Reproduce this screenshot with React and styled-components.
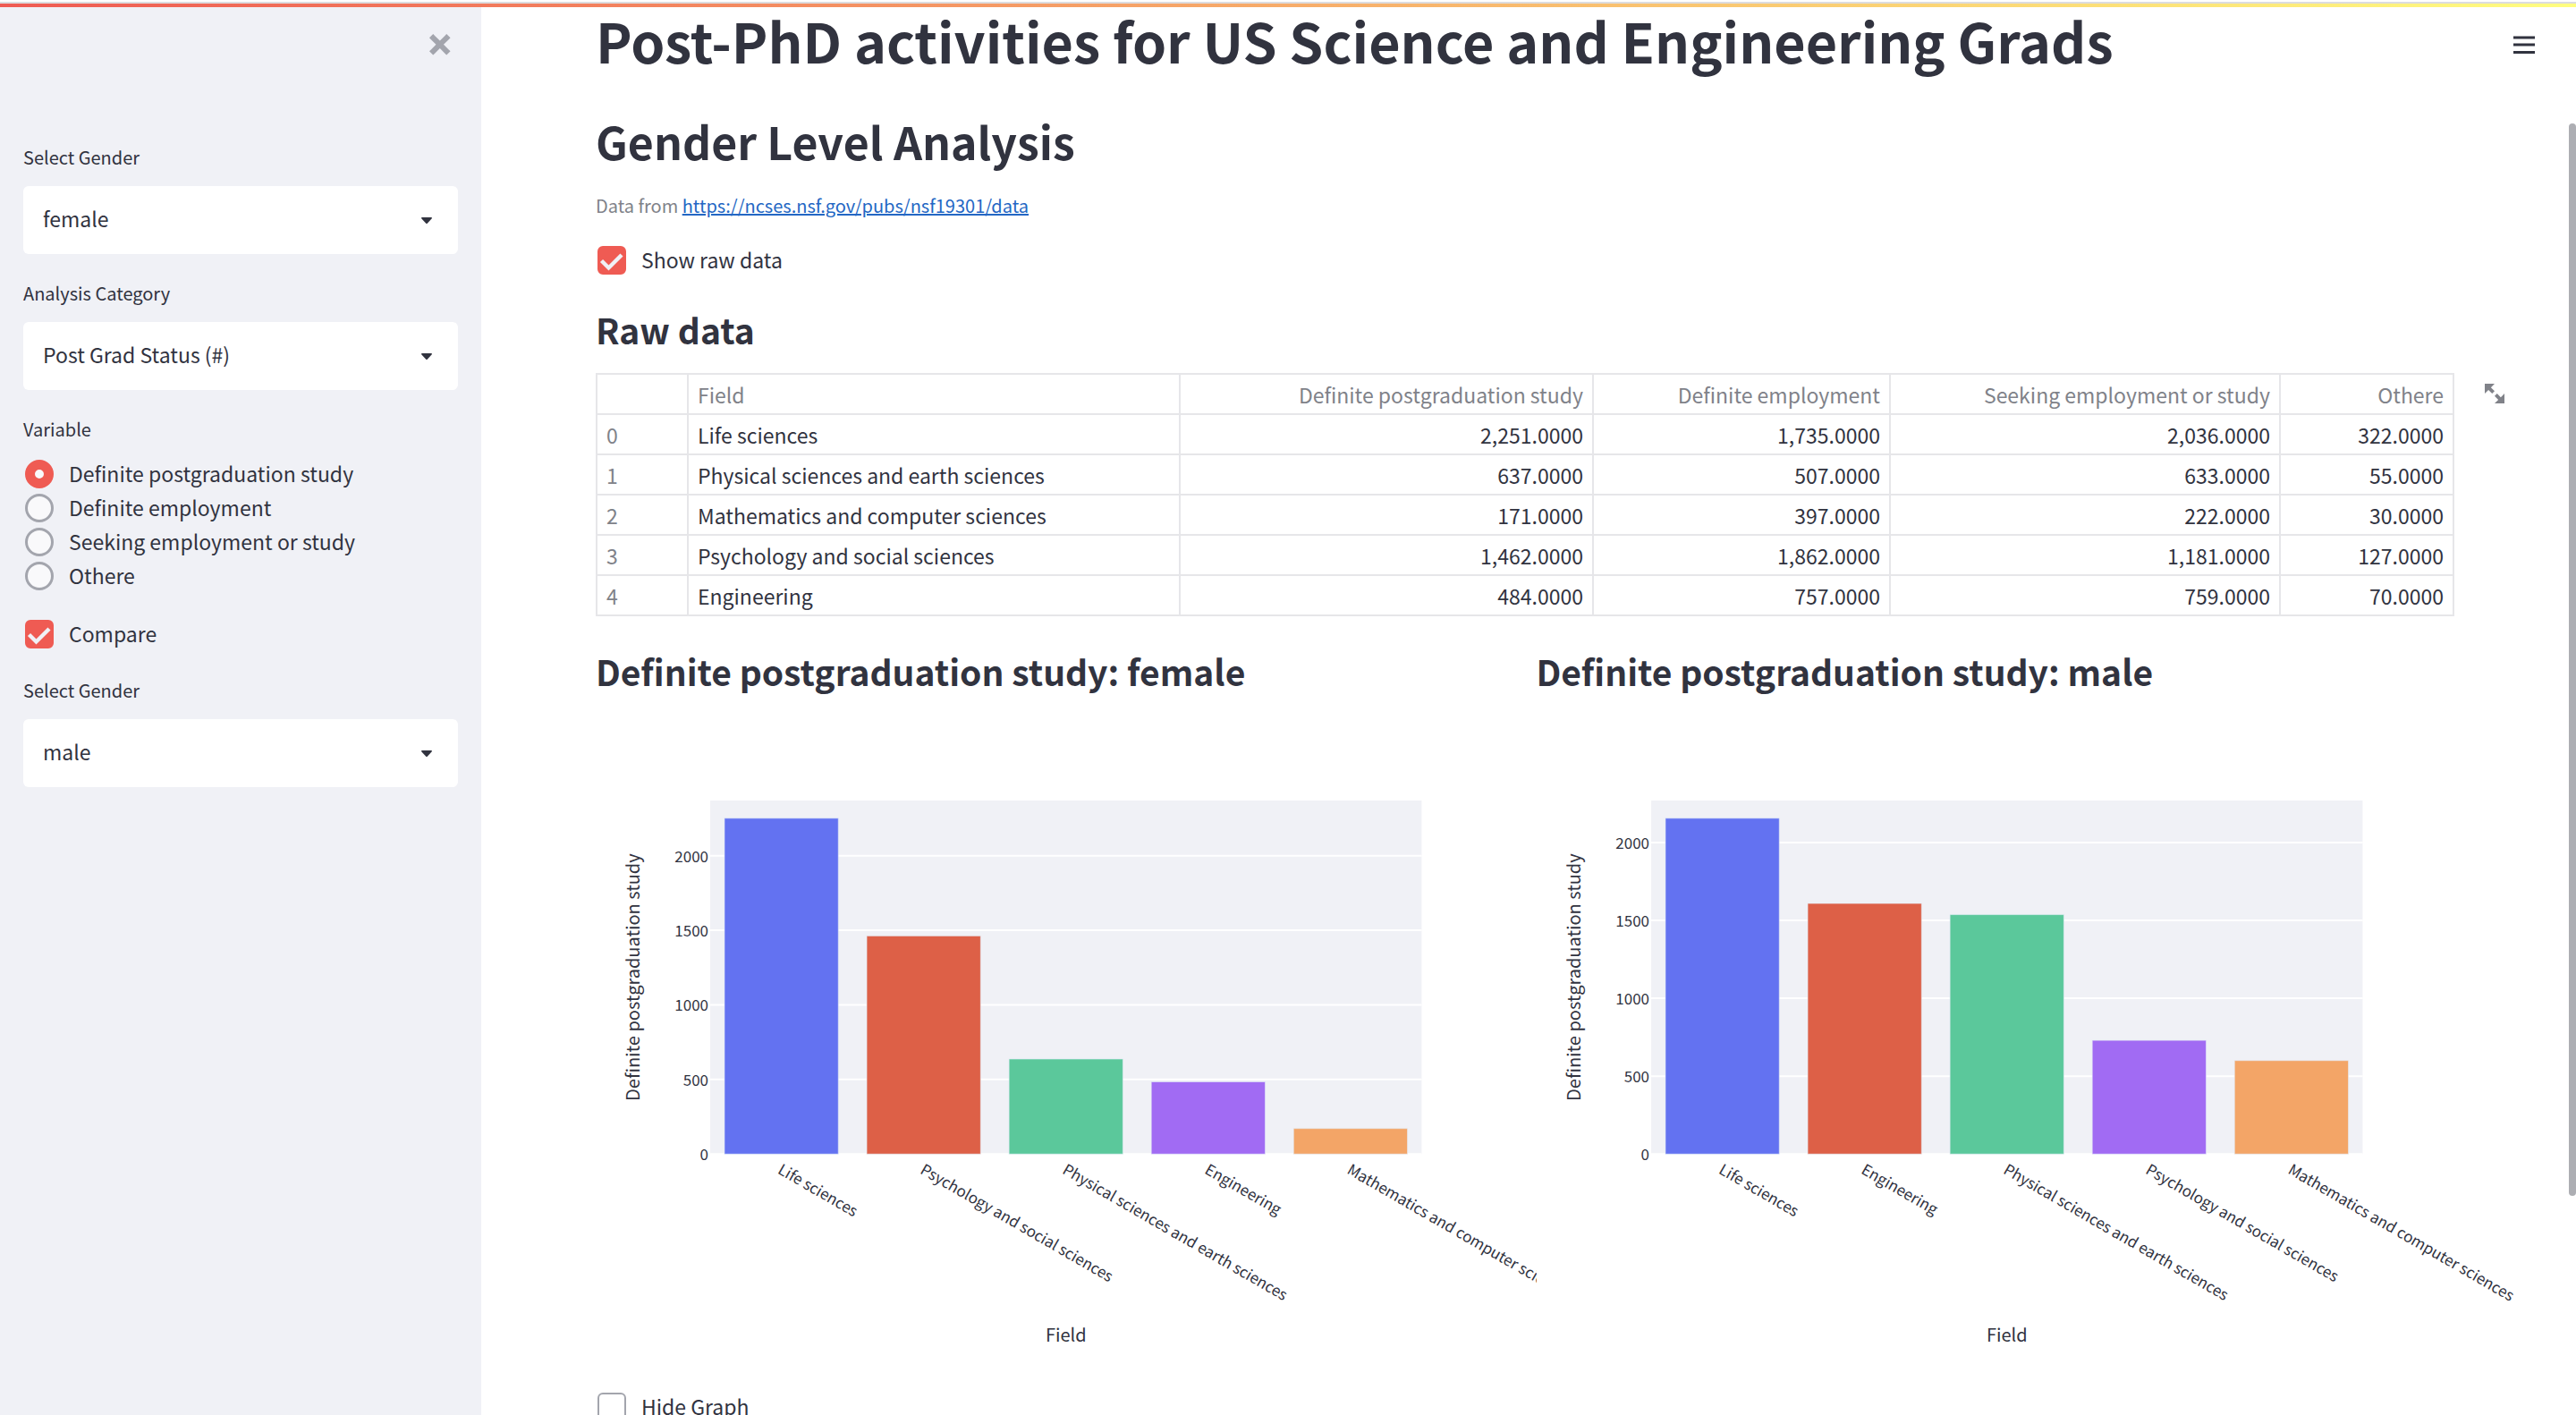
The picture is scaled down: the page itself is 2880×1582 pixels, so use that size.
import React, { useId } from "react";
import styled, { createGlobalStyle } from "styled-components";

const ink = "#31333f";
const muted = "#808289";
const line = "#e6e6e9";
const accent = "#ef5b53";
const ring = "#a3a5ad";
const panel = "#f0f1f6";
const sans = '"Noto Sans CJK SC", "Noto Sans", sans-serif';

const GlobalStyle = createGlobalStyle`
  * { box-sizing: border-box; }
  body { margin: 0; background: #fff; color: ${ink}; font-family: ${sans}; font-size: 23px; }
  button, select, input { font: inherit; color: inherit; margin: 0; }
`;

const Page = styled.div`
  position: relative;
  display: flex;
  height: 100vh;
  overflow: hidden;
`;

const TopBar = styled.div`
  position: absolute;
  inset: 0 0 auto 0;
  height: 8px;
  z-index: 2;
  border-top: 2px solid #fff;
  background: linear-gradient(90deg, ${accent}, #fffd80);
  &::before {
    content: "";
    display: block;
    height: 2px;
    background: #dcdcdf;
  }
`;

const Sidebar = styled.aside`
  flex: 0 0 538px;
  background: ${panel};
  padding: 0 26px;
`;

const SidebarHeader = styled.div`
  display: flex;
  justify-content: flex-end;
  align-items: flex-start;
  height: 158px;
  padding-top: 34px;
`;

const IconButton = styled.button`
  display: flex;
  align-items: center;
  justify-content: center;
  width: 40px;
  height: 32px;
  padding: 0;
  border: 0;
  background: none;
  color: ${(p) => p.$color};
`;

const Controls = styled.form`
  display: flex;
  flex-direction: column;
  gap: 26px;
`;

const Field = styled.div`
  display: flex;
  flex-direction: column;
  gap: 14px;
`;

const FieldLabel = styled.label`
  font-size: 20px;
  line-height: 36px;
`;

const RadioSet = styled.fieldset`
  margin: 0;
  padding: 0 0 1px;
  border: 0;
  min-width: 0;
`;

const Legend = styled.legend`
  padding: 0 0 13px;
  font-size: 20px;
  line-height: 36px;
`;

const SelectWrap = styled.div`
  position: relative;
  svg {
    position: absolute;
    right: 29px;
    top: 35px;
    pointer-events: none;
  }
`;

const SelectBox = styled.select`
  appearance: none;
  display: block;
  width: 100%;
  height: 76px;
  padding: 0 64px 4px 22px;
  border: 0;
  border-radius: 6px;
  background: #fff;
`;

const Choice = styled.label`
  display: flex;
  align-items: center;
  gap: 17px;
  height: 38px;
  padding-left: 2px;
`;

const ChoiceText = styled.span`
  padding-bottom: 2px;
`;

const Radio = styled.input`
  appearance: none;
  flex: none;
  width: 32px;
  height: 32px;
  border: 3px solid ${ring};
  border-radius: 50%;
  background: #f9f9fb;
  &:checked {
    border: 11px solid ${accent};
  }
`;

const CheckMark = styled.span`
  position: relative;
  display: flex;
  flex: none;
  svg {
    position: absolute;
    inset: 0;
    pointer-events: none;
  }
`;

const Checkbox = styled.input`
  appearance: none;
  width: 32px;
  height: 32px;
  border: 2px solid ${ring};
  border-radius: 6px;
  background: #fff;
  &:checked {
    border-color: ${accent};
    background: ${accent};
  }
`;

const Main = styled.main`
  position: relative;
  flex: 1;
  min-width: 0;
  padding: 6px 111px 0 128px;
`;

const MenuSlot = styled.div`
  position: absolute;
  top: 34px;
  right: 38px;
`;

const Title = styled.h1`
  margin: 0;
  font-size: 61px;
  line-height: 78px;
  font-weight: 600;
`;

const SectionTitle = styled.h2`
  margin: 41px 0 0;
  font-size: 50px;
  line-height: 64px;
  font-weight: 600;
`;

const SubTitle = styled.h3`
  margin: 33px 0 24px;
  font-size: 39px;
  line-height: 50px;
  font-weight: 600;
`;

const Caption = styled.p`
  margin: 23px 0 24px;
  font-size: 20px;
  line-height: 36px;
  color: ${muted};
  a { color: #2467c4; }
`;

const TableArea = styled.div`
  position: relative;
  margin-bottom: 3px;
  padding-right: 25px;
`;

const ExpandSlot = styled.div`
  position: absolute;
  top: 7px;
  right: -40px;
`;

const DataTable = styled.table`
  width: 100%;
  table-layout: fixed;
  border-collapse: collapse;
  line-height: 36px;
  th, td {
    height: 45px;
    padding: 0 10px;
    border: 2px solid ${line};
    font-weight: 400;
    text-align: right;
  }
  thead th, tbody th { color: ${muted}; }
  th:nth-child(1), th:nth-child(2), td:nth-child(2) { text-align: left; }
`;

const Col = styled.col`
  width: ${(p) => p.$width};
`;

const Columns = styled.div`
  display: grid;
  grid-template-columns: 1fr 1fr;
`;

const ChartPanel = styled.section`
  min-width: 0;
`;

const ChartSvg = styled.svg`
  display: block;
  width: 100%;
  height: auto;
  overflow: ${(p) => (p.$clip ? "hidden" : "visible")};
  margin-bottom: 35px;
  text { fill: ${ink}; font-family: ${sans}; font-size: 17px; }
  text.axis { font-size: 20px; text-anchor: middle; }
`;

const ScrollThumb = styled.div`
  position: absolute;
  top: 138px;
  right: 0;
  width: 8px;
  height: 1199px;
  border-radius: 4px;
  background: #adaeb3;
`;

function Select({ label, value, options }) {
  const id = useId();
  return (
    <Field>
      <FieldLabel htmlFor={id}>{label}</FieldLabel>
      <SelectWrap>
        <SelectBox id={id} defaultValue={value}>
          {options.map((o) => (
            <option key={o}>{o}</option>
          ))}
        </SelectBox>
        <svg width="12" height="7" viewBox="0 0 12 7" aria-hidden="true">
          <path d="M1 0h10a1 1 0 0 1 .6 1.6L7 6.4a1.4 1.4 0 0 1-2 0L.4 1.6A1 1 0 0 1 1 0z" fill={ink} />
        </svg>
      </SelectWrap>
    </Field>
  );
}

function Check({ label, checked }) {
  return (
    <Choice>
      <CheckMark>
        <Checkbox type="checkbox" defaultChecked={checked} />
        {checked && (
          <svg width="32" height="32" viewBox="0 0 32 32" aria-hidden="true">
            <path d="M4.5 16.5l8 8L27 10" fill="none" stroke="#f0f1f6" strokeWidth="4.4" />
          </svg>
        )}
      </CheckMark>
      <ChoiceText>{label}</ChoiceText>
    </Choice>
  );
}

const variables = [
  "Definite postgraduation study",
  "Definite employment",
  "Seeking employment or study",
  "Othere",
];

const rows = [
  ["Life sciences", 2251, 1735, 2036, 322],
  ["Physical sciences and earth sciences", 637, 507, 633, 55],
  ["Mathematics and computer sciences", 171, 397, 222, 30],
  ["Psychology and social sciences", 1462, 1862, 1181, 127],
  ["Engineering", 484, 757, 759, 70],
];

const female = [
  ["Life sciences", 2251],
  ["Psychology and social sciences", 1462],
  ["Physical sciences and earth sciences", 637],
  ["Engineering", 484],
  ["Mathematics and computer sciences", 171],
];

const male = [
  ["Life sciences", 2156],
  ["Engineering", 1609],
  ["Physical sciences and earth sciences", 1537],
  ["Psychology and social sciences", 730],
  ["Mathematics and computer sciences", 600],
];

const palette = ["#6372f1", "#dd6047", "#5bc89b", "#a16bf3", "#f3a567"];

const formatNumber = (n) =>
  n.toLocaleString("en-US", { minimumFractionDigits: 4 });

function BarChart({ data, yTitle, clip }) {
  const plot = { x: 128, y: 96, w: 795, h: 395 };
  const bottom = plot.y + plot.h;
  const scale = (plot.h * 0.95) / data[0][1];
  const step = plot.w / data.length;
  const mid = plot.y + plot.h / 2;
  return (
    <ChartSvg viewBox="0 0 1051 720" role="img" aria-label={yTitle} $clip={clip}>
      <rect x={plot.x} y={plot.y} width={plot.w} height={plot.h} fill={panel} />
      {[0, 500, 1000, 1500, 2000].map((t) => {
        const y = bottom - t * scale;
        return (
          <g key={t}>
            <line x1={plot.x} x2={plot.x + plot.w} y1={y} y2={y} stroke="#fff" strokeWidth="2" />
            <text x={plot.x - 2} y={y + 7} textAnchor="end">{t}</text>
          </g>
        );
      })}
      {data.map(([name, value], i) => {
        const h = value * scale;
        const cx = plot.x + step * (i + 0.5);
        return (
          <g key={name}>
            <rect
              x={cx - step * 0.4}
              y={bottom - h}
              width={step * 0.8}
              height={h}
              fill={palette[i]}
              stroke="#e5ecf6"
              strokeOpacity="0.6"
            />
            <text transform={`translate(${cx - 5} ${bottom + 21}) rotate(30)`}>{name}</text>
          </g>
        );
      })}
      <text className="axis" x={plot.x + plot.w / 2} y="701">Field</text>
      <text className="axis" transform={`translate(49 ${mid}) rotate(-90)`}>{yTitle}</text>
    </ChartSvg>
  );
}

export default function App() {
  return (
    <>
      <GlobalStyle />
      <Page>
        <TopBar />
        <Sidebar>
          <SidebarHeader>
            <IconButton type="button" aria-label="Close sidebar" $color={ring}>
              <svg width="24" height="24" viewBox="0 0 8 8" fill="currentColor" aria-hidden="true">
                <path d="M1.41 0L0 1.41l.72.72 1.78 1.81-1.78 1.78L0 6.41l1.41 1.44.72-.72 1.81-1.81 1.78 1.81.69.72 1.44-1.44-.72-.69-1.81-1.78 1.81-1.81.72-.72L6.41 0l-.69.72L3.94 2.5 2.13.72 1.41 0z" />
              </svg>
            </IconButton>
          </SidebarHeader>
          <Controls>
            <Select label="Select Gender" value="female" options={["female", "male"]} />
            <Select
              label="Analysis Category"
              value="Post Grad Status (#)"
              options={["Post Grad Status (#)"]}
            />
            <RadioSet>
              <Legend>Variable</Legend>
              {variables.map((v, i) => (
                <Choice key={v}>
                  <Radio type="radio" name="variable" defaultChecked={i === 0} />
                  <ChoiceText>{v}</ChoiceText>
                </Choice>
              ))}
            </RadioSet>
            <Check label="Compare" checked />
            <Select label="Select Gender" value="male" options={["female", "male"]} />
          </Controls>
        </Sidebar>
        <Main>
          <MenuSlot>
            <IconButton type="button" aria-label="Menu" $color={ink}>
              <svg width="24" height="20" viewBox="0 0 24 20" aria-hidden="true">
                <path d="M0 2h24M0 10h24M0 18.5h24" stroke="currentColor" strokeWidth="2.8" />
              </svg>
            </IconButton>
          </MenuSlot>
          <Title>Post-PhD activities for US Science and Engineering Grads</Title>
          <SectionTitle>Gender Level Analysis</SectionTitle>
          <Caption>
            Data from{" "}
            <a href="https://ncses.nsf.gov/pubs/nsf19301/data">
              https://ncses.nsf.gov/pubs/nsf19301/data
            </a>
          </Caption>
          <Check label="Show raw data" checked />
          <SubTitle>Raw data</SubTitle>
          <TableArea>
            <DataTable>
              <colgroup>
                <Col $width="102px" />
                <Col $width="auto" />
                <Col $width="462px" />
                <Col $width="332px" />
                <Col $width="436px" />
                <Col $width="194px" />
              </colgroup>
              <thead>
                <tr>
                  <th />
                  <th scope="col">Field</th>
                  {variables.map((v) => (
                    <th key={v} scope="col">{v}</th>
                  ))}
                </tr>
              </thead>
              <tbody>
                {rows.map(([name, ...values], i) => (
                  <tr key={name}>
                    <th scope="row">{i}</th>
                    <td>{name}</td>
                    {values.map((n, j) => (
                      <td key={j}>{formatNumber(n)}</td>
                    ))}
                  </tr>
                ))}
              </tbody>
            </DataTable>
            <ExpandSlot>
              <IconButton type="button" aria-label="View fullscreen" $color={muted}>
                <svg width="22" height="22" viewBox="0 0 8 8" fill="currentColor" aria-hidden="true">
                  <path d="M0 0v4l1.5-1.5L3 4 4 3 2.5 1.5 4 0H0zm5 4L4 5l1.5 1.5L4 8h4V4L6.5 5.5 5 4z" />
                </svg>
              </IconButton>
            </ExpandSlot>
          </TableArea>
          <Columns>
            <ChartPanel>
              <SubTitle>Definite postgraduation study: female</SubTitle>
              <BarChart data={female} yTitle="Definite postgraduation study" clip />
            </ChartPanel>
            <ChartPanel>
              <SubTitle>Definite postgraduation study: male</SubTitle>
              <BarChart data={male} yTitle="Definite postgraduation study" />
            </ChartPanel>
          </Columns>
          <Check label="Hide Graph" />
          <ScrollThumb />
        </Main>
      </Page>
    </>
  );
}
